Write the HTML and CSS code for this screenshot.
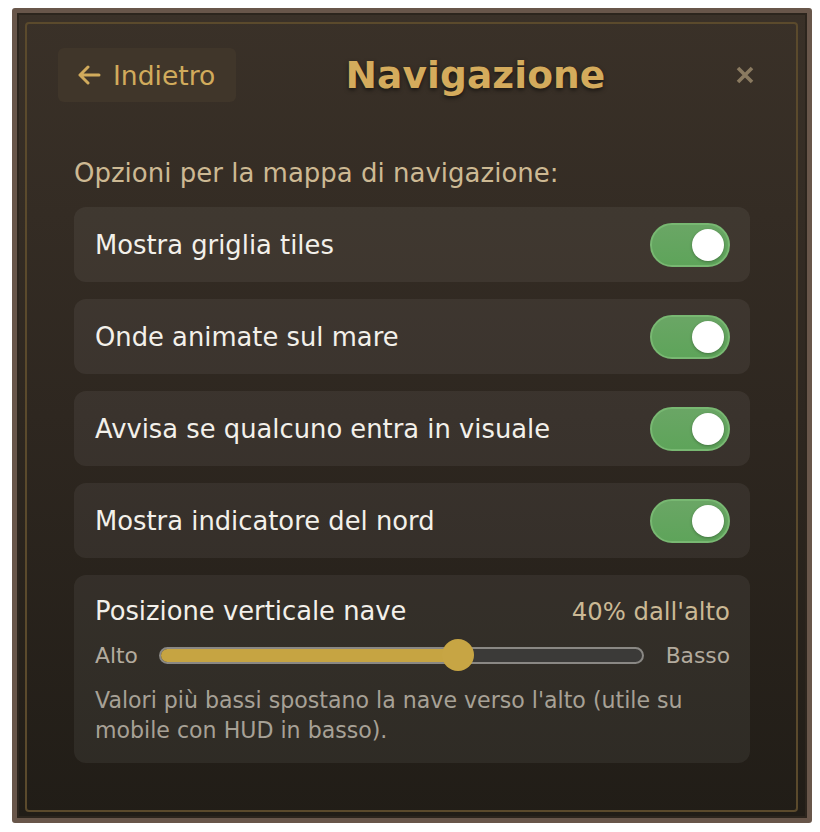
FILE: index.html
```html
<!DOCTYPE html>
<html lang="it">
<head>
<meta charset="utf-8">
<title>Navigazione</title>
<link rel="stylesheet" href="styles.css">
</head>
<body>
<div class="panel">
  <div class="header">
    <button class="back-btn">
      <svg class="arrow" width="24" height="20" viewBox="0 0 24 20"><path d="M22 10 H3 M11 2 L3 10 L11 18" fill="none" stroke="#d1ab5c" stroke-width="3" stroke-linecap="round" stroke-linejoin="round"/></svg>
      <span>Indietro</span>
    </button>
    <h1 class="title">Navigazione</h1>
    <button class="close-btn" aria-label="Chiudi">
      <svg width="18" height="18" viewBox="0 0 18 18"><path d="M2 2 L16 16 M16 2 L2 16" stroke="#8a7a60" stroke-width="3.6" stroke-linecap="butt"/></svg>
    </button>
  </div>
  <div class="body">
    <p class="subtitle">Opzioni per la mappa di navigazione:</p>
    <div class="rows">
      <div class="row">
        <span class="row-label">Mostra griglia tiles</span>
        <span class="toggle"><span class="knob"></span></span>
      </div>
      <div class="row">
        <span class="row-label">Onde animate sul mare</span>
        <span class="toggle"><span class="knob"></span></span>
      </div>
      <div class="row">
        <span class="row-label">Avvisa se qualcuno entra in visuale</span>
        <span class="toggle"><span class="knob"></span></span>
      </div>
      <div class="row">
        <span class="row-label">Mostra indicatore del nord</span>
        <span class="toggle"><span class="knob"></span></span>
      </div>
      <div class="slider-card">
        <div class="slider-head">
          <span class="row-label">Posizione verticale nave</span>
          <span class="slider-value">40% dall'alto</span>
        </div>
        <div class="slider-line">
          <span class="end-label">Alto</span>
          <div class="track">
            <div class="fill" style="width: 61.7%"></div>
            <div class="thumb" style="left: 61.7%"></div>
          </div>
          <span class="end-label">Basso</span>
        </div>
        <p class="hint">Valori più bassi spostano la nave verso l'alto (utile su mobile con HUD in basso).</p>
      </div>
    </div>
  </div>
</div>
</body>
</html>
```
FILE: styles.css
```css
html, body {
  margin: 0;
  padding: 0;
  background: #ffffff;
}

body {
  padding: 8px 0 0 12px;
  font-family: "DejaVu Sans", Verdana, sans-serif;
}

.panel {
  position: relative;
  box-sizing: border-box;
  width: 800px;
  height: 815px;
  border: 5px solid #68564a;
  border-radius: 3px;
  background: linear-gradient(180deg, #3a3128 0%, #2e2720 50%, #211d17 100%);
  box-shadow: inset 0 0 0 2px #2c251d;
  padding: 35px 0 0 0;
}

.panel::before {
  content: "";
  position: absolute;
  left: 8px;
  top: 9px;
  right: 9px;
  bottom: 6px;
  border: 2px solid #5b4a2c;
  border-radius: 4px;
  pointer-events: none;
}

.header {
  display: flex;
  align-items: center;
  padding: 0 38px 0 41px;
  height: 54px;
}

.back-btn {
  display: flex;
  align-items: center;
  gap: 12px;
  height: 54px;
  width: 178px;
  box-sizing: border-box;
  padding: 0 0 0 19px;
  border: none;
  border-radius: 6px;
  background: #40362a;
  color: #d1ab5c;
  font-family: "DejaVu Sans", Verdana, sans-serif;
  font-size: 26.6px;
  cursor: pointer;
}

.back-btn .arrow {
  display: block;
  flex: none;
}

.title {
  flex: 1;
  margin: 0;
  text-align: center;
  font-size: 37.5px;
  font-weight: bold;
  color: #d4ab5c;
  text-shadow: 0 2px 4px rgba(0, 0, 0, 0.55);
  letter-spacing: 0.1px;
  padding-right: 6px;
}

.close-btn {
  width: 48px;
  height: 48px;
  border: none;
  background: transparent;
  display: flex;
  align-items: center;
  justify-content: center;
  padding: 0;
  cursor: pointer;
}

.body {
  padding: 0 57px;
}

.subtitle {
  margin: 56px 0 19px 0;
  font-size: 26px;
  line-height: 30px;
  color: #cdb993;
}

.rows {
  display: flex;
  flex-direction: column;
  gap: 17px;
}

.row {
  display: flex;
  align-items: center;
  justify-content: space-between;
  height: 75px;
  box-sizing: border-box;
  padding: 0 20px 0 21px;
  border-radius: 12px;
  background: rgba(255, 255, 255, 0.058);
}

.row-label {
  font-size: 25.8px;
  color: #f3f0ea;
}

.toggle {
  position: relative;
  display: block;
  width: 80px;
  height: 44px;
  box-sizing: border-box;
  border-radius: 22px;
  border: 2px solid #78b872;
  background: linear-gradient(180deg, #6aa665 0%, #5ea45a 100%);
}

.knob {
  position: absolute;
  right: 4px;
  top: 4px;
  width: 32px;
  height: 32px;
  border-radius: 50%;
  background: #ffffff;
  box-shadow: 0 1px 3px rgba(0, 0, 0, 0.3);
}

.slider-card {
  border-radius: 12px;
  background: rgba(255, 255, 255, 0.058);
  padding: 20px 20px 18px 21px;
}

.slider-head {
  display: flex;
  justify-content: space-between;
  align-items: center;
  height: 32px;
}

.slider-value {
  font-size: 24.3px;
  color: #cbb995;
}

.slider-line {
  display: flex;
  align-items: center;
  height: 32px;
  margin-top: 12px;
  gap: 0;
}

.end-label {
  font-size: 21.8px;
  color: #b3ab9e;
}

.track {
  position: relative;
  flex: 1;
  height: 17px;
  box-sizing: border-box;
  margin: 0 22px 0 21px;
  border: 2px solid #8a8884;
  border-radius: 9px;
  background: #3b3a38;
}

.fill {
  height: 100%;
  border-radius: 7px 0 0 7px;
  background: #c6a442;
}

.thumb {
  position: absolute;
  top: 50%;
  width: 32px;
  height: 32px;
  margin: -16px 0 0 -16px;
  border-radius: 50%;
  background: #c7a544;
}

.hint {
  margin: 14px 0 0 0;
  font-size: 22.1px;
  line-height: 30px;
  color: #a7a196;
}
```
